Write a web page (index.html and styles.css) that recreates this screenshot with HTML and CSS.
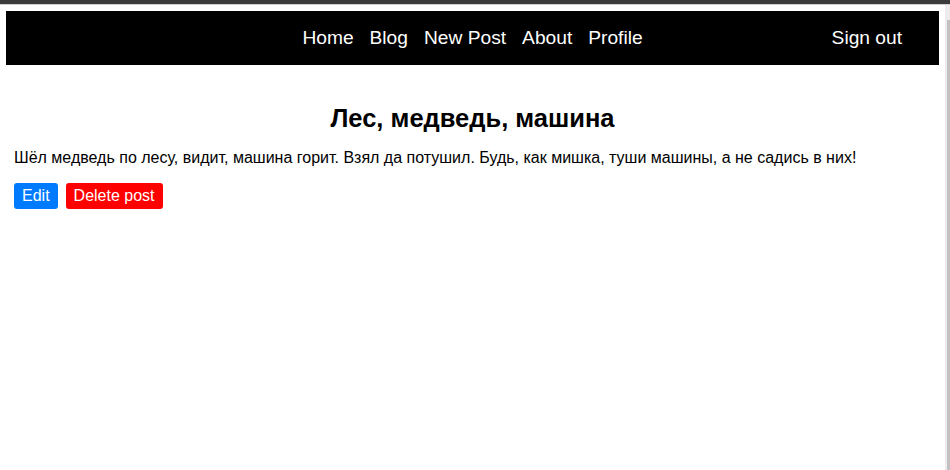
FILE: index.html
```html
<!DOCTYPE html>
<html lang="ru">
<head>
<meta charset="utf-8">
<title>Лес, медведь, машина</title>
<link rel="stylesheet" href="styles.css">
</head>
<body>
<div class="chrome-top"></div>
<div class="scrollbar"><div class="scroll-arrow"></div><div class="scroll-thumb"></div></div>
<div class="page">
  <nav class="navbar">
    <div class="nav-spacer"></div>
    <ul class="nav-links">
      <li><a href="#">Home</a></li>
      <li><a href="#">Blog</a></li>
      <li><a href="#">New Post</a></li>
      <li><a href="#">About</a></li>
      <li><a href="#">Profile</a></li>
    </ul>
    <div class="nav-right"><a href="#">Sign out</a></div>
  </nav>
  <main class="post">
    <h2 class="post-title">Лес, медведь, машина</h2>
    <p class="post-body">Шёл медведь по лесу, видит, машина горит. Взял да потушил. Будь, как мишка, туши машины, а не садись в них!</p>
    <div class="post-actions">
      <button class="btn btn-edit">Edit</button>
      <button class="btn btn-delete">Delete post</button>
    </div>
  </main>
</div>
</body>
</html>
```

FILE: styles.css
```css
html, body {
  margin: 0;
  padding: 0;
  background: #ffffff;
  font-family: "Liberation Sans", Arial, sans-serif;
  color: #000000;
}

.chrome-top {
  height: 4px;
  background: #3b3b3b;
  border-bottom: 1px solid #cfcfcf;
}

.scrollbar {
  position: fixed;
  top: 5px;
  right: 0;
  bottom: 0;
  width: 5px;
  background: #ececec;
  display: flex;
  flex-direction: column;
}

.scroll-arrow {
  height: 15px;
}

.scroll-thumb {
  flex: 1;
  margin-left: 2px;
  background: #c1c1c1;
}

.page {
  padding: 6px 11px 0 6px;
}

.navbar {
  height: 54px;
  background: #000000;
  display: grid;
  grid-template-columns: 1fr auto 1fr;
  align-items: center;
}

.nav-links {
  list-style: none;
  margin: 0;
  padding: 0;
  display: flex;
}

.nav-links a,
.nav-right a {
  display: block;
  padding: 0 8px;
  color: #ffffff;
  text-decoration: none;
  font-size: 19.2px;
}

.nav-right {
  justify-self: end;
  padding-right: 29px;
}

.post {
  padding: 0 8px;
}

.post-title {
  margin: 39px 0 0;
  text-align: center;
  font-size: 25.5px;
  font-weight: bold;
}

.post-body {
  margin: 16px 0 0;
  font-size: 16px;
}

.post-actions {
  margin-top: 16px;
  display: flex;
  gap: 8px;
}

.btn {
  font-family: "Liberation Sans", Arial, sans-serif;
  font-size: 16px;
  line-height: 20px;
  padding: 3px 8px;
  border: none;
  border-radius: 3px;
  color: #ffffff;
  cursor: pointer;
}

.btn-edit {
  background: #007bff;
}

.btn-delete {
  background: #ff0000;
}
```
